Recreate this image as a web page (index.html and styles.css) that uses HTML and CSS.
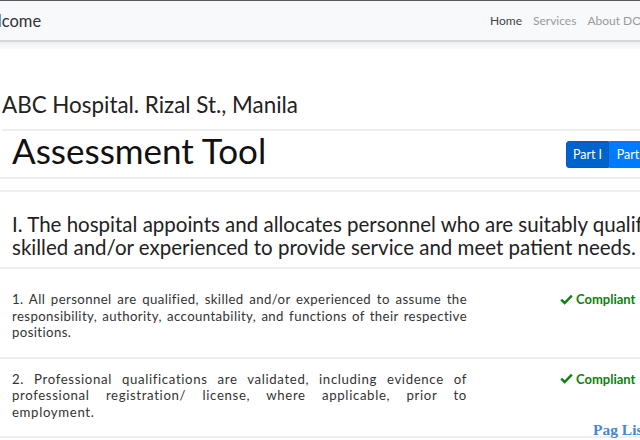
FILE: index.html
```html
<!DOCTYPE html>
<html lang="en">
<head>
<meta charset="utf-8">
<title>Assessment Tool</title>
<link rel="stylesheet" href="styles.css">
</head>
<body>
<div class="topline"></div>
<nav class="navbar">
  <a class="brand" href="#">Welcome</a>
  <ul class="nav">
    <li><a class="active" href="#">Home</a></li>
    <li><a href="#">Services</a></li>
    <li><a href="#">About DOH</a></li>
  </ul>
</nav>
<div class="navshadow"></div>

<main class="page">
  <h3 class="facility">ABC Hospital. Rizal St., Manila</h3>
  <div class="titlebar">
    <h1 class="title">Assessment Tool</h1>
    <div class="btn-group">
      <button class="btn active">Part I</button>
      <button class="btn">Part II</button>
    </div>
  </div>
  <div class="spacer"></div>
  <section class="standard">
    <h4 class="std-title">I. The hospital appoints and allocates personnel who are suitably qualified, skilled and/or experienced to provide service and meet patient needs.</h4>
  </section>
  <div class="item">
    <p class="item-text">1. All personnel are qualified, skilled and/or experienced to assume the responsibility, authority, accountability, and functions of their respective positions.</p>
    <span class="status"><svg class="check" viewBox="0 0 14 12" width="13" height="11"><path d="M1.2 6.2 L5 9.8 L12.8 1.8" fill="none" stroke="#0b820b" stroke-width="2.6"/></svg>Compliant</span>
  </div>
  <div class="item">
    <p class="item-text item-text-loose">2. Professional qualifications are validated, including evidence of professional registration/ license, where applicable, prior to employment.</p>
    <span class="status"><svg class="check" viewBox="0 0 14 12" width="13" height="11"><path d="M1.2 6.2 L5 9.8 L12.8 1.8" fill="none" stroke="#0b820b" stroke-width="2.6"/></svg>Compliant</span>
  </div>
</main>
<div class="pagelist">Pag List</div>
</body>
</html>
```
FILE: styles.css
```css
html, body {
  margin: 0;
  padding: 0;
  background: #fff;
  overflow: hidden;
  width: 640px;
  height: 440px;
}
body {
  font-family: "Lato", "Open Sans", sans-serif;
  color: #212529;
  position: relative;
}
.topline {
  height: 1px;
  background: #5a5a5a;
}
.navbar {
  height: 39px;
  background: #f8f9fa;
  display: flex;
  align-items: center;
  white-space: nowrap;
}
.brand {
  margin-left: -27px;
  font-size: 16.5px;
  color: #333;
  text-decoration: none;
}
.nav {
  list-style: none;
  margin: 0 0 0 auto;
  padding: 0;
  display: flex;
  gap: 11px;
  margin-right: -11px;
  font-size: 12px;
}
.nav a {
  color: #9a9a9a;
  text-decoration: none;
}
.nav a.active {
  color: #444;
}
.navshadow {
  height: 7px;
  border-top: 2px solid #d6d6d6;
  background: linear-gradient(#efefef, #fbfbfb);
}
.page {
  width: 700px;
}
.facility {
  margin: 41px 0 0 2px;
  font-size: 22.4px;
  font-weight: 400;
  line-height: 30px;
  padding-bottom: 9px;
  border-bottom: 2px solid #eeeeee;
  color: #222;
}
.titlebar {
  display: flex;
  align-items: center;
  justify-content: space-between;
  height: 46px;
  border-bottom: 2px solid #eeeeee;
  padding: 0 0 0 12px;
}
.title {
  margin: 0 0 8px 0;
  font-size: 35px;
  font-weight: 400;
  color: #111;
}
.btn-group {
  display: flex;
  margin-right: 43px;
}
.btn {
  border: 1px solid #0062cc;
  background: #007bff;
  color: #fff;
  font-family: inherit;
  font-size: 12.5px;
  height: 27px;
  padding: 0;
}
.btn.active {
  width: 43px;
  background: #0062cc;
  border-color: #005cbf;
  border-radius: 3px 0 0 3px;
}
.btn + .btn {
  border-radius: 0 3px 3px 0;
  border-color: #007bff;
  width: 48px;
}
.spacer {
  height: 11px;
  border-bottom: 2px solid #eeeeee;
}
.standard {
  padding: 21px 0 9px 12px;
  border-bottom: 2px solid #eeeeee;
  margin-bottom: 10px;
}
.std-title {
  margin: 0;
  font-size: 20.5px;
  font-weight: 400;
  line-height: 22.5px;
  color: #222;
  width: 680px;
}
.item {
  display: grid;
  grid-template-columns: 455px auto;
  column-gap: 93px;
  padding: 12px 0 16px 12px;
  border-bottom: 2px solid #eeeeee;
}
.item-text {
  margin: 0;
  font-size: 13.2px;
  letter-spacing: 0.4px;
  line-height: 16.5px;
  text-align: justify;
  color: #333;
}
.item-text-loose {
  letter-spacing: 0.65px;
}
.status {
  display: flex;
  align-items: center;
  gap: 3px;
  color: #0b820b;
  font-size: 13px;
  font-weight: 700;
  height: 16px;
}
.check {
  display: block;
}
.pagelist {
  position: absolute;
  left: 593px;
  top: 421px;
  font-family: "Liberation Serif", serif;
  font-weight: 700;
  font-size: 15.5px;
  color: #4a86d0;
  white-space: nowrap;
}
```
